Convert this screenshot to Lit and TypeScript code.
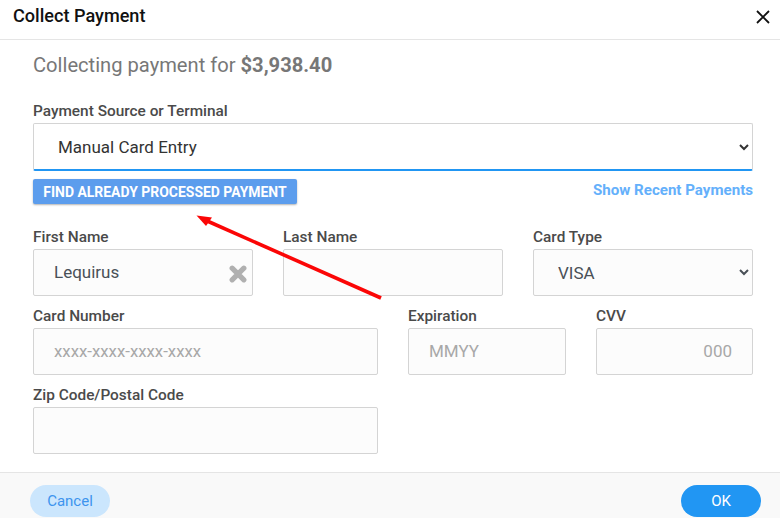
import { LitElement, html, css } from "lit";
import { customElement } from "lit/decorators.js";

@customElement("app-root")
export class AppRoot extends LitElement {
  static styles = css`
    :host { display: block; width: 780px; height: 518px; overflow: hidden; position: relative; background: #fff; font-family: Roboto, "Liberation Sans", sans-serif; }
    * { box-sizing: border-box; }
    .head { height: 40px; border-bottom: 1px solid #e5e5e5; display: flex; align-items: center; justify-content: space-between; padding: 0 10px 7px 13px; }
    .title { font-size: 18.1px; font-weight: 500; color: #111; line-height: 32px; }
    .close { display: block; width: 14px; height: 14px; margin-top: 2px; }
    .body { height: 432px; padding: 13px 27px 0 33px; }
    .amount { font-size: 20.15px; line-height: 24px; color: #777; }
    .amount b { font-weight: 700; }
    .label { display: block; font-size: 15.4px; font-weight: 500; color: #4a4a4a; line-height: 18px; height: 18px; margin-bottom: 3px; }
    .source { margin-top: 25px; }
    .ctl { display: block; width: 100%; height: 47px; border: 1px solid #d4d4d4; border-radius: 2px; background: #fcfcfc; font: 400 17px Roboto, sans-serif; color: #495057; padding: 0 20px 2px; outline: none; }
    select.ctl { padding: 0 20px; }
    .ctl::placeholder { color: #a8a8a8; opacity: 1; }
    .cc::placeholder { font-size: 16.8px; }
    select.src { height: 48px; background: #fff; color: #333; border-bottom: 2px solid #2196f3; padding: 0 20px; margin-top: 1px; }
    .actions { display: flex; justify-content: space-between; align-items: flex-start; margin-top: 8px; }
    .find { height: 25px; border: 0; border-radius: 2px; background: #5c9ded; color: #fff; font: 700 13.95px Roboto, sans-serif; padding: 0; width: 264px; box-shadow: 0 1px 2px rgba(0,0,0,.3); white-space: nowrap; }
    .recent { font-size: 15.1px; font-weight: 700; color: #64b0fb; line-height: 18px; margin-top: 2px; }
    .row { display: grid; gap: 30px; }
    .r1 { grid-template-columns: 220px 220px 220px; margin-top: 24px; }
    .r2 { grid-template-columns: 345px 158px 157px; margin-top: 11px; }
    .r3 { grid-template-columns: 345px; margin-top: 11px; }
    .fld { position: relative; }
    .wrap { position: relative; }
    .clear { position: absolute; right: 6px; top: 16px; width: 18px; height: 18px; display: block; }
    .right { text-align: right; }
    .foot { height: 46px; background: #f9f9f9; border-top: 1px solid #e5e5e5; display: flex; justify-content: space-between; align-items: flex-start; padding: 12px 19px 0 30px; }
    .btn { width: 80px; height: 32px; border: 0; border-radius: 16px; font: 400 15px Roboto, sans-serif; padding: 0; }
    .cancel { background: #cbe6fd; color: #3d94ee; }
    .ok { background: #2196f3; color: #fff; }
    .arrow { position: absolute; left: 190px; top: 205px; width: 200px; height: 100px; pointer-events: none; }
  `;

  render() {
    return html`
      <div class="head">
        <div class="title">Collect Payment</div>
        <svg class="close" viewBox="0 0 14 14"><path d="M1 1L13 13M13 1L1 13" stroke="#111" stroke-width="1.8" fill="none"/></svg>
      </div>
      <div class="body">
        <div class="amount">Collecting payment for <b>$3,938.40</b></div>
        <div class="source">
          <label class="label">Payment Source or Terminal</label>
          <select class="ctl src"><option>Manual Card Entry</option></select>
        </div>
        <div class="actions">
          <button class="find">FIND ALREADY PROCESSED PAYMENT</button>
          <span class="recent">Show Recent Payments</span>
        </div>
        <div class="row r1">
          <div class="fld">
            <label class="label">First Name</label>
            <div class="wrap">
              <input class="ctl" .value=${"Lequirus"} />
              <svg class="clear" viewBox="0 0 16 16"><path d="M2.8 2.8L13.2 13.2M13.2 2.8L2.8 13.2" stroke="#b0b0b0" stroke-width="4.6" stroke-linecap="round" fill="none"/></svg>
            </div>
          </div>
          <div class="fld"><label class="label">Last Name</label><input class="ctl" /></div>
          <div class="fld"><label class="label">Card Type</label><select class="ctl"><option>VISA</option></select></div>
        </div>
        <div class="row r2">
          <div class="fld"><label class="label">Card Number</label><input class="ctl cc" placeholder="xxxx-xxxx-xxxx-xxxx" /></div>
          <div class="fld"><label class="label">Expiration</label><input class="ctl" placeholder="MMYY" /></div>
          <div class="fld"><label class="label">CVV</label><input class="ctl right" placeholder="000" /></div>
        </div>
        <div class="row r3">
          <div class="fld"><label class="label">Zip Code/Postal Code</label><input class="ctl" /></div>
        </div>
      </div>
      <div class="foot">
        <button class="btn cancel">Cancel</button>
        <button class="btn ok">OK</button>
      </div>
      <svg class="arrow" viewBox="190 205 200 100">
        <path d="M381 298L205 220" stroke="#fb0606" stroke-width="3.6" fill="none"/>
        <path d="M196.5 215.5L212 217.5L206 226Z" fill="#fb0606"/>
      </svg>
    `;
  }
}
